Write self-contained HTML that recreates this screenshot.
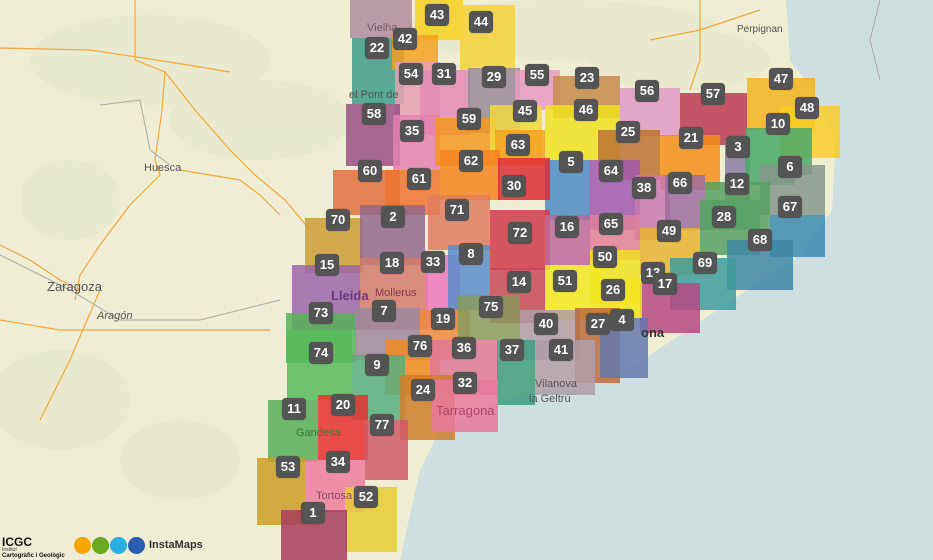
<!DOCTYPE html>
<html><head><meta charset="utf-8"><style>
*{margin:0;padding:0;box-sizing:border-box}
body{width:933px;height:560px;overflow:hidden;background:#efedd4;font-family:"Liberation Sans",sans-serif;position:relative}
.s{position:absolute;opacity:.85}
.m{position:absolute;width:24px;height:22px;margin:-11px 0 0 -12px;background:#545454;border-radius:4px;color:#fff;font-weight:bold;font-size:13px;line-height:22px;text-align:center;box-shadow:0 0 1px rgba(0,0,0,.4)}
.l{position:absolute;font-size:11px;color:#555;white-space:nowrap}
</style></head><body>
<svg width="933" height="560" style="position:absolute;left:0;top:0">
<g fill="#e2e7c8" opacity=".5">
<ellipse cx="150" cy="60" rx="120" ry="45"/><ellipse cx="260" cy="120" rx="90" ry="40"/><ellipse cx="560" cy="30" rx="160" ry="30"/><ellipse cx="680" cy="60" rx="90" ry="30"/><ellipse cx="60" cy="400" rx="70" ry="50"/><ellipse cx="180" cy="460" rx="60" ry="40"/><ellipse cx="70" cy="200" rx="50" ry="40"/>
</g>
<polygon fill="#cfdfdf" points="786,0 933,0 933,560 400,560 420,470 440,430 500,400 560,385 620,375 680,335 740,295 800,255 832,210 836,140 812,90 790,60"/>
<g fill="none" stroke="#f3a93a" stroke-width="1.2">
<path d="M0,48 L90,50 L170,62 L230,72 M135,0 L135,60 L165,72 L195,110 L230,150 L255,175 L285,200 L310,230"/>
<path d="M165,72 L162,110 L155,160 L160,175 L130,205 L100,245 L80,275 L75,300"/>
<path d="M0,245 L30,260 L60,280 L80,290 M180,170 L240,180 L260,195 L280,215"/>
<path d="M0,320 L60,330 L130,330 L200,330 L270,330 M100,290 L85,325 L70,360 L40,420"/>
<path d="M700,0 L700,60 L690,90 M650,40 L700,30 L760,10"/>
</g>
<g fill="none" stroke="#aaa" stroke-width="1"><path d="M100,105 L140,100 L150,150 L170,165 M0,255 L70,290 L120,320 L200,320 L280,300"/><path d="M880,0 L870,40 L880,80"/></g>
</svg>
<div class="l" style="left:144px;top:162px">Huesca</div>
<div class="l" style="left:47px;top:279px;font-size:13px">Zaragoza</div>
<div class="l" style="left:97px;top:310px;font-style:italic">Aragón</div>
<div class="l" style="left:737px;top:24px;font-size:10px">Perpignan</div>

<div class="s" style="left:350px;top:0;width:62px;height:38px;background:#b28ca0"></div>
<div class="s" style="left:415px;top:0;width:48px;height:40px;background:#f5d020"></div>
<div class="s" style="left:460px;top:5px;width:55px;height:65px;background:#f4d23a"></div>
<div class="s" style="left:352px;top:38px;width:52px;height:66px;background:#3e9c8a"></div>
<div class="s" style="left:392px;top:35px;width:46px;height:35px;background:#f5a020"></div>
<div class="s" style="left:395px;top:62px;width:45px;height:55px;background:#e6a0b4"></div>
<div class="s" style="left:420px;top:70px;width:50px;height:65px;background:#e58ab5"></div>
<div class="s" style="left:468px;top:68px;width:52px;height:65px;background:#9a8a98"></div>
<div class="s" style="left:515px;top:70px;width:45px;height:40px;background:#e59ac2"></div>
<div class="s" style="left:553px;top:76px;width:67px;height:42px;background:#c4894a"></div>
<div class="s" style="left:620px;top:88px;width:60px;height:48px;background:#e09ac4"></div>
<div class="s" style="left:680px;top:93px;width:67px;height:52px;background:#bb3a52"></div>
<div class="s" style="left:747px;top:78px;width:68px;height:52px;background:#f5b320"></div>
<div class="s" style="left:780px;top:106px;width:60px;height:52px;background:#f7cc2a"></div>
<div class="s" style="left:346px;top:104px;width:54px;height:62px;background:#9a5082"></div>
<div class="s" style="left:393px;top:115px;width:47px;height:55px;background:#e580b0"></div>
<div class="s" style="left:435px;top:118px;width:60px;height:48px;background:#f59820"></div>
<div class="s" style="left:490px;top:105px;width:52px;height:55px;background:#f1d840"></div>
<div class="s" style="left:545px;top:105px;width:75px;height:55px;background:#f0e020"></div>
<div class="s" style="left:598px;top:130px;width:62px;height:50px;background:#bd7232"></div>
<div class="s" style="left:660px;top:135px;width:60px;height:55px;background:#f58e18"></div>
<div class="s" style="left:725px;top:140px;width:25px;height:60px;background:#8a7ea2"></div>
<div class="s" style="left:745px;top:128px;width:67px;height:47px;background:#4aa868"></div>
<div class="s" style="left:745px;top:175px;width:50px;height:10px;background:#4aa868"></div>
<div class="s" style="left:495px;top:130px;width:50px;height:35px;background:#f5a020"></div>
<div class="s" style="left:440px;top:150px;width:60px;height:50px;background:#f58420"></div>
<div class="s" style="left:545px;top:160px;width:45px;height:60px;background:#4e8cc4"></div>
<div class="s" style="left:590px;top:160px;width:50px;height:70px;background:#a058b0"></div>
<div class="s" style="left:333px;top:170px;width:67px;height:45px;background:#e07040"></div>
<div class="s" style="left:385px;top:170px;width:55px;height:45px;background:#ee7430"></div>
<div class="s" style="left:498px;top:158px;width:52px;height:42px;background:#dd2e36"></div>
<div class="s" style="left:635px;top:175px;width:35px;height:65px;background:#c87ab0"></div>
<div class="s" style="left:665px;top:175px;width:40px;height:55px;background:#9e6ca0"></div>
<div class="s" style="left:760px;top:165px;width:65px;height:50px;background:#86958d"></div>
<div class="s" style="left:705px;top:182px;width:65px;height:48px;background:#56a060"></div>
<div class="s" style="left:305px;top:218px;width:58px;height:55px;background:#cc9c34"></div>
<div class="s" style="left:360px;top:205px;width:65px;height:60px;background:#94688c"></div>
<div class="s" style="left:428px;top:195px;width:62px;height:55px;background:#e07c60"></div>
<div class="s" style="left:490px;top:210px;width:60px;height:60px;background:#d03a4a"></div>
<div class="s" style="left:545px;top:215px;width:45px;height:50px;background:#c0689a"></div>
<div class="s" style="left:590px;top:215px;width:50px;height:45px;background:#e0809a"></div>
<div class="s" style="left:640px;top:228px;width:60px;height:47px;background:#e8b430"></div>
<div class="s" style="left:700px;top:200px;width:60px;height:55px;background:#58a064"></div>
<div class="s" style="left:770px;top:215px;width:55px;height:42px;background:#3c88b2"></div>
<div class="s" style="left:727px;top:240px;width:66px;height:50px;background:#3e86a6"></div>
<div class="s" style="left:292px;top:265px;width:68px;height:65px;background:#9e66ac"></div>
<div class="s" style="left:360px;top:258px;width:68px;height:72px;background:#d47a6c"></div>
<div class="s" style="left:425px;top:255px;width:35px;height:75px;background:#ee78bc"></div>
<div class="s" style="left:448px;top:245px;width:42px;height:65px;background:#5a8ecc"></div>
<div class="s" style="left:590px;top:250px;width:50px;height:55px;background:#f0e020"></div>
<div class="s" style="left:670px;top:258px;width:66px;height:52px;background:#3e9c9c"></div>
<div class="s" style="left:640px;top:283px;width:60px;height:50px;background:#b84880"></div>
<div class="s" style="left:490px;top:268px;width:55px;height:55px;background:#c84858"></div>
<div class="s" style="left:545px;top:265px;width:55px;height:55px;background:#f2e820"></div>
<div class="s" style="left:600px;top:278px;width:42px;height:40px;background:#f2e420"></div>
<div class="s" style="left:286px;top:313px;width:70px;height:50px;background:#58b058"></div>
<div class="s" style="left:355px;top:308px;width:65px;height:52px;background:#9e889e"></div>
<div class="s" style="left:420px;top:310px;width:50px;height:50px;background:#f08840"></div>
<div class="s" style="left:458px;top:295px;width:62px;height:45px;background:#8a9a5e"></div>
<div class="s" style="left:520px;top:310px;width:60px;height:50px;background:#b09ca8"></div>
<div class="s" style="left:575px;top:308px;width:45px;height:75px;background:#bd6a38"></div>
<div class="s" style="left:600px;top:318px;width:48px;height:60px;background:#6478ae"></div>
<div class="s" style="left:385px;top:340px;width:55px;height:55px;background:#f08a20"></div>
<div class="s" style="left:430px;top:340px;width:68px;height:55px;background:#e0789a"></div>
<div class="s" style="left:497px;top:340px;width:38px;height:65px;background:#3e9c80"></div>
<div class="s" style="left:535px;top:340px;width:60px;height:55px;background:#ae9ea8"></div>
<div class="s" style="left:287px;top:330px;width:65px;height:70px;background:#58b85c"></div>
<div class="s" style="left:352px;top:355px;width:53px;height:65px;background:#58ae80"></div>
<div class="s" style="left:400px;top:375px;width:55px;height:65px;background:#d07e2c"></div>
<div class="s" style="left:432px;top:380px;width:66px;height:52px;background:#e8789e"></div>
<div class="s" style="left:268px;top:400px;width:50px;height:62px;background:#58ae58"></div>
<div class="s" style="left:318px;top:395px;width:50px;height:65px;background:#e83030"></div>
<div class="s" style="left:365px;top:420px;width:43px;height:60px;background:#d05a6a"></div>
<div class="s" style="left:257px;top:458px;width:48px;height:67px;background:#cc9e28"></div>
<div class="s" style="left:305px;top:460px;width:60px;height:52px;background:#ee7c9e"></div>
<div class="s" style="left:345px;top:487px;width:52px;height:65px;background:#e6cc34"></div>
<div class="s" style="left:281px;top:510px;width:66px;height:50px;background:#a83c5e"></div>

<div class="l" style="left:367px;top:22px;color:#7a5a6a">Vielha</div>
<div class="l" style="left:349px;top:89px">el Pont de</div>
<div class="l" style="left:331px;top:288px;font-size:13px;font-weight:bold;color:#6a3a7a">Lleida</div>
<div class="l" style="left:375px;top:287px;color:#8a3a4a">Mollerus</div>
<div class="l" style="left:436px;top:403px;font-size:13px;color:#b04a6a">Tarragona</div>
<div class="l" style="left:535px;top:378px">Vilanova</div>
<div class="l" style="left:529px;top:393px">la Geltrú</div>
<div class="l" style="left:641px;top:325px;font-size:13px;font-weight:bold;color:#333">ona</div>
<div class="l" style="left:296px;top:427px;color:#3a7a3a">Gandesa</div>
<div class="l" style="left:316px;top:490px;color:#8a4a6a">Tortosa</div>

<div class="m" style="left:437px;top:15px">43</div>
<div class="m" style="left:481px;top:22px">44</div>
<div class="m" style="left:377px;top:48px">22</div>
<div class="m" style="left:405px;top:39px">42</div>
<div class="m" style="left:411px;top:74px">54</div>
<div class="m" style="left:444px;top:74px">31</div>
<div class="m" style="left:494px;top:77px">29</div>
<div class="m" style="left:537px;top:75px">55</div>
<div class="m" style="left:587px;top:78px">23</div>
<div class="m" style="left:647px;top:91px">56</div>
<div class="m" style="left:713px;top:94px">57</div>
<div class="m" style="left:781px;top:79px">47</div>
<div class="m" style="left:807px;top:108px">48</div>
<div class="m" style="left:374px;top:114px">58</div>
<div class="m" style="left:412px;top:131px">35</div>
<div class="m" style="left:469px;top:119px">59</div>
<div class="m" style="left:525px;top:111px">45</div>
<div class="m" style="left:586px;top:110px">46</div>
<div class="m" style="left:628px;top:132px">25</div>
<div class="m" style="left:691px;top:138px">21</div>
<div class="m" style="left:778px;top:124px">10</div>
<div class="m" style="left:738px;top:147px">3</div>
<div class="m" style="left:790px;top:167px">6</div>
<div class="m" style="left:518px;top:145px">63</div>
<div class="m" style="left:471px;top:161px">62</div>
<div class="m" style="left:571px;top:162px">5</div>
<div class="m" style="left:611px;top:171px">64</div>
<div class="m" style="left:370px;top:171px">60</div>
<div class="m" style="left:419px;top:179px">61</div>
<div class="m" style="left:514px;top:186px">30</div>
<div class="m" style="left:644px;top:188px">38</div>
<div class="m" style="left:680px;top:183px">66</div>
<div class="m" style="left:737px;top:184px">12</div>
<div class="m" style="left:790px;top:207px">67</div>
<div class="m" style="left:338px;top:220px">70</div>
<div class="m" style="left:393px;top:217px">2</div>
<div class="m" style="left:457px;top:210px">71</div>
<div class="m" style="left:520px;top:233px">72</div>
<div class="m" style="left:567px;top:227px">16</div>
<div class="m" style="left:611px;top:224px">65</div>
<div class="m" style="left:669px;top:231px">49</div>
<div class="m" style="left:724px;top:217px">28</div>
<div class="m" style="left:760px;top:240px">68</div>
<div class="m" style="left:327px;top:265px">15</div>
<div class="m" style="left:392px;top:263px">18</div>
<div class="m" style="left:433px;top:262px">33</div>
<div class="m" style="left:471px;top:254px">8</div>
<div class="m" style="left:605px;top:257px">50</div>
<div class="m" style="left:705px;top:263px">69</div>
<div class="m" style="left:653px;top:273px">13</div>
<div class="m" style="left:665px;top:284px">17</div>
<div class="m" style="left:519px;top:282px">14</div>
<div class="m" style="left:565px;top:281px">51</div>
<div class="m" style="left:613px;top:290px">26</div>
<div class="m" style="left:321px;top:313px">73</div>
<div class="m" style="left:384px;top:311px">7</div>
<div class="m" style="left:443px;top:319px">19</div>
<div class="m" style="left:491px;top:307px">75</div>
<div class="m" style="left:546px;top:324px">40</div>
<div class="m" style="left:598px;top:324px">27</div>
<div class="m" style="left:622px;top:320px">4</div>
<div class="m" style="left:420px;top:346px">76</div>
<div class="m" style="left:464px;top:348px">36</div>
<div class="m" style="left:512px;top:350px">37</div>
<div class="m" style="left:561px;top:350px">41</div>
<div class="m" style="left:321px;top:353px">74</div>
<div class="m" style="left:377px;top:365px">9</div>
<div class="m" style="left:423px;top:390px">24</div>
<div class="m" style="left:465px;top:383px">32</div>
<div class="m" style="left:294px;top:409px">11</div>
<div class="m" style="left:343px;top:405px">20</div>
<div class="m" style="left:382px;top:425px">77</div>
<div class="m" style="left:288px;top:467px">53</div>
<div class="m" style="left:338px;top:462px">34</div>
<div class="m" style="left:366px;top:497px">52</div>
<div class="m" style="left:313px;top:513px">1</div>

<div style="position:absolute;left:2px;top:536px;line-height:1">
<div style="font-size:12px;font-weight:bold;color:#111">ICGC</div>
<div style="font-size:5px;color:#333">Institut</div>
<div style="font-size:6px;font-weight:bold;color:#111">Cartogràfic i Geològic</div>
</div>
<div style="position:absolute;left:74px;top:537px;width:17px;height:17px;border-radius:50%;background:#f6a400"></div>
<div style="position:absolute;left:92px;top:537px;width:17px;height:17px;border-radius:50%;background:#6aa820"></div>
<div style="position:absolute;left:110px;top:537px;width:17px;height:17px;border-radius:50%;background:#2ab0e0"></div>
<div style="position:absolute;left:128px;top:537px;width:17px;height:17px;border-radius:50%;background:#2a5cb0"></div>
<div style="position:absolute;left:149px;top:539px;font-size:11px;font-weight:bold;color:#333">InstaMaps</div>
</body></html>
